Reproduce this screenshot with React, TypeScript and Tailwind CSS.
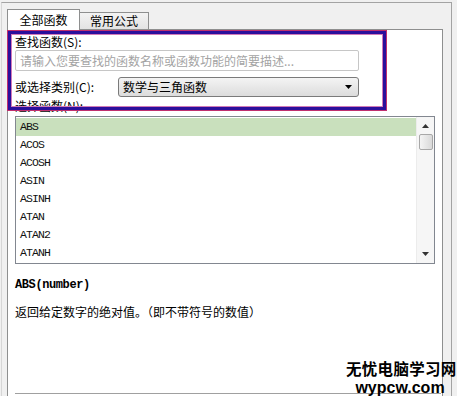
const cjk = { fontFamily: '"Noto Sans CJK SC", "Noto Sans", sans-serif' };
const mono = { fontFamily: '"Liberation Mono", "DejaVu Sans Mono", monospace' };

const functions = ['ABS', 'ACOS', 'ACOSH', 'ASIN', 'ASINH', 'ATAN', 'ATAN2', 'ATANH'];

function TriangleDown({ className }: { className?: string }) {
  return (
    <svg width="7" height="4" viewBox="0 0 7 4" className={className}>
      <path d="M0 0 H7 L3.5 4 Z" fill="currentColor" />
    </svg>
  );
}

function TriangleUp({ className }: { className?: string }) {
  return (
    <svg width="7" height="4" viewBox="0 0 7 4" className={className}>
      <path d="M0 4 H7 L3.5 0 Z" fill="currentColor" />
    </svg>
  );
}

export default function App() {
  return (
    <div className="relative w-[457px] h-[396px] overflow-hidden bg-[#f0f0f0] pt-[2px] text-black" style={cjk}>
      {/* outer frame */}
      <div className="ml-[1px] w-[451px] h-[400px] border-t border-r border-l border-t-[#a3a3a3] border-r-[#a3a3a3] border-l-[#d6d6d6] pl-[5px] pt-[6px]">
        {/* Tabs */}
        <div className="flex items-end h-[20px]">
          <div className="relative z-10 -mb-px h-[21px] w-[73px] border-t border-l border-r border-[#8e8f8f] bg-white flex items-center justify-center text-[12px] leading-4">
            全部函数
          </div>
          <div className="h-[17px] w-[69px] border-t border-r border-[#8e8f8f] bg-gradient-to-b from-[#f3f3f3] to-[#e3e3e3] flex items-center justify-center text-[12px] leading-4">
            常用公式
          </div>
        </div>

        {/* Panel */}
        <div className="w-[436px] h-[380px] border border-[#8e8f8f] bg-white pl-[7px] pr-[7px] pt-[4px]">
          <div className="h-4 text-[12px] leading-4">查找函数(S):</div>
          <div className="w-[344px] h-[21px] border border-[#c6c6c6] rounded-[2px] flex items-center pl-[4px] text-[12px] leading-4 text-[#a3a3a3]">
            请输入您要查找的函数名称或函数功能的简要描述...
          </div>
          <div className="mt-[6px] flex items-center h-[20px]">
            <div className="w-[103px] text-[12px] leading-4">或选择类别(C):</div>
            <div className="w-[241px] h-[20px] border border-[#7a7a7a] rounded-[3px] bg-gradient-to-b from-[#f4f4f4] to-[#dcdcdc] flex items-center justify-between pl-[4px] pr-[6px] text-[12px] leading-4">
              <span>数学与三角函数</span>
              <TriangleDown className="text-black" />
            </div>
          </div>
          <div className="mt-px h-4 text-[12px] leading-4">选择函数(N):</div>

          {/* function list */}
          <div className="mt-[2px] w-[420px] h-[148px] border border-[#828790] flex">
            <div className="flex-1 pt-px">
              {functions.map((f, i) => (
                <div
                  key={f}
                  className={`h-[18px] flex items-center pl-[4px] text-[11.5px] tracking-[-0.9px] text-[#111] ${i === 0 ? 'bg-[#c9e0bd]' : ''}`}
                  style={mono}
                >
                  {f}
                </div>
              ))}
            </div>
            <div className="w-[18px] h-full border-l border-[#ececec] bg-[#f6f6f6] flex flex-col items-center pt-[7px] pb-[7px]">
              <TriangleUp className="text-[#333]" />
              <div className="mt-[6px] w-[14px] h-[16px] border border-[#a8a8a8] rounded-[2px] bg-gradient-to-r from-[#f4f4f4] to-[#d9d9d9]" />
              <div className="flex-1" />
              <TriangleDown className="text-[#333]" />
            </div>
          </div>

          <div className="mt-[13px] h-4 flex items-center text-[12px] font-bold tracking-[-0.4px]" style={mono}>
            ABS(number)
          </div>
          <div className="mt-[11px] h-4 text-[12px] leading-4">返回给定数字的绝对值。（即不带符号的数值）</div>

          <div className="mt-[73px] w-[426px] border-t border-[#a0a0a0]" />
        </div>
      </div>

      {/* annotation rectangle drawn over the dialog */}
      <div className="absolute left-[8px] top-[31px] w-[378px] h-[79px] border-[3px] border-[#2b0f9c] shadow-[0_0_0_1px_#c0306e,inset_0_0_0_1px_#d27ab8]" />

      {/* watermark */}
      <div className="absolute left-[346px] top-[360px] flex flex-col items-end">
        <div className="h-[17px] text-[15.5px] leading-[17px] font-bold tracking-[0.3px]" style={cjk}>无忧电脑学习网</div>
        <div className="mt-[3px] mr-[12px] h-[16px] text-[16px] leading-[16px] font-bold" style={{ fontFamily: '"Liberation Sans", Arial, sans-serif' }}>
          wypcw.com
        </div>
      </div>
    </div>
  );
}
